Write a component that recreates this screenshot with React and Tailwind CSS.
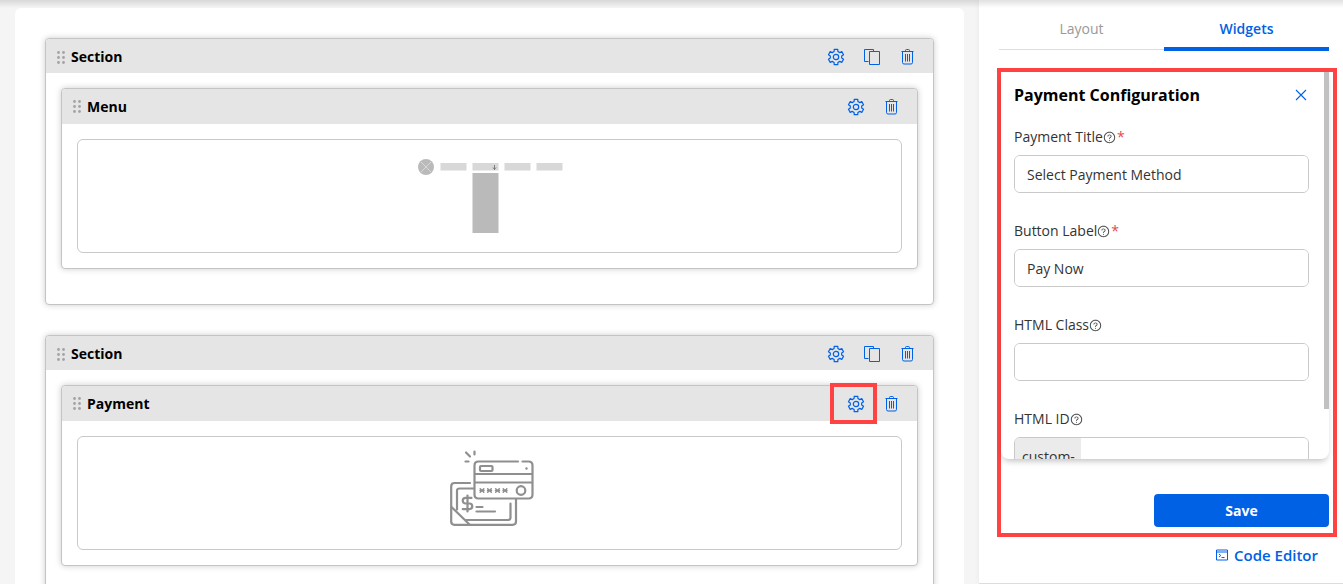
import React, { useState } from 'react';
import { DollarSign } from 'lucide-react';
import { AiOutlineQuestionCircle } from 'react-icons/ai';

const DragHandle = () => (
  <svg width="8" height="13" viewBox="0 0 8 13" fill="#a3a3a3" aria-hidden="true">
    {[1.5, 6.5, 11.5].map((y) => (
      <g key={y}>
        <circle cx="1.5" cy={y} r="1.4" />
        <circle cx="6.5" cy={y} r="1.4" />
      </g>
    ))}
  </svg>
);

// Outline of a six-toothed gear, centred on 9,9
const gearPoints = [-90, -30, 30, 90, 150, 210]
  .flatMap((a) => [
    [7.9, a - 13],
    [7.9, a + 13],
    [5.8, a + 19],
    [5.8, a + 41],
  ])
  .map(([r, deg]) => {
    const t = (deg * Math.PI) / 180;
    return `${(9 + r * Math.cos(t)).toFixed(2)},${(9 + r * Math.sin(t)).toFixed(2)}`;
  })
  .join(' ');

const GearIcon = () => (
  <svg
    width="18"
    height="18"
    viewBox="0 0 18 18"
    fill="none"
    stroke="currentColor"
    strokeWidth="1.2"
    strokeLinejoin="round"
    aria-hidden="true"
  >
    <polygon points={gearPoints} />
    <circle cx="9" cy="9" r="2.7" />
  </svg>
);

const CopyIcon = () => (
  <svg width="16" height="16" viewBox="0 0 16 16" fill="none" stroke="currentColor" aria-hidden="true">
    <path d="M4.5 12.5h-4v-12h9v2" />
    <path d="M5.5 2.5h10v13h-10z" />
  </svg>
);

const TrashIcon = () => (
  <svg width="14" height="16" viewBox="0 0 14 16" fill="none" stroke="currentColor" aria-hidden="true">
    <path d="M.5 2.5h12M4.5 2.5v-1q0-1 1-1h2q1 0 1 1v1" />
    <path d="M1.5 2.5v11q0 1.5 1.5 1.5h7q1.5 0 1.5-1.5v-11" />
    <path d="M4.5 5v7.500M6.5 5v7.500M8.5 5v7.500" />
  </svg>
);

const CloseIcon = () => (
  <svg width="12" height="12" viewBox="0 0 12 12" fill="none" stroke="currentColor" strokeWidth="1.1" aria-hidden="true">
    <path d="M1 1l10 10M11 1L1 11" />
  </svg>
);

const TerminalIcon = () => (
  <svg width="12" height="12" viewBox="0 0 12 12" fill="none" stroke="currentColor" aria-hidden="true">
    <path d="M.5 1h11v10H.5zM.5 3h11" />
    <path d="M3 5l1.8 1.5L3 8M5.5 8.500h3" />
  </svg>
);

// Placeholder artwork for the menu widget
const MenuPreview = () => (
  <svg width="146" height="76" viewBox="0 0 146 76" aria-hidden="true">
    <circle cx="9" cy="9" r="8" fill="#bababa" />
    <path d="M4 4l10 10M14 4L4 14" stroke="#d8d8d8" />
    {[23.5, 55.5, 87.5, 119.5].map((x) => (
      <rect key={x} x={x} y="5" width="26" height="7.5" fill="#d8d8d8" />
    ))}
    <path d="M77.5 7v5M76 9.500l1.500 2 1.500-2" stroke="#777" fill="none" strokeWidth=".9" />
    <rect x="55.500" y="15" width="26" height="60" fill="#bababa" />
  </svg>
);

// Placeholder artwork for the payment widget
const PaymentPreview = () => (
  <svg
    width="84"
    height="76"
    viewBox="0 0 84 76"
    fill="none"
    stroke="#8f8f8f"
    strokeWidth="2.2"
    strokeLinecap="round"
    strokeLinejoin="round"
    className="mb-2.5 ml-1"
    aria-hidden="true"
  >
    <path d="M16 2.500l4 4M24.500 1.500v3M15.500 11.500h3" />
    <path d="M68 11.500h-39.500q-4 0-4 4v29q0 4 4 4h50q4 0 4-4v-29q0-4-4-4h-6" />
    <path d="M25 24h57M25 32.500h57" />
    <rect x="30" y="16" width="12.500" height="5" rx="1" />
    <circle cx="76.500" cy="18.500" r="1.200" fill="#8f8f8f" stroke="none" />
    <circle cx="71" cy="40.500" r="4.300" />
    {[32, 39.5, 47.5, 55].map((x) => (
      <path
        key={x}
        d={`M${x - 1.8} 38.700l3.600 3.600M${x + 1.8} 38.700l-3.600 3.600M${x - 2} 40.500h4`}
        strokeWidth="1.5"
      />
    ))}
    <path d="M20 33H4.500q-3.300 0-3.300 3.500v35q0 3.300 3.300 3.300h58q3.500 0 3.500-3.300V49.500" />
    <path d="M24 38.500H9.500q-2.500 0-2.500 2v19M60.500 53.500v14q0 2.500-2.500 2.500H16" />
    <path d="M1.500 57l18 17.500" />
    <path d="M26.500 57h6M26.500 61.500h18.500" />
    <DollarSign x="8" y="44" width="19" height="19" strokeWidth={2.8} color="#8f8f8f" />
  </svg>
);

const IconButton = ({ label, highlighted, children }) => (
  <button type="button" aria-label={label} className="relative flex w-9 items-center justify-center text-[#0061e5]">
    {children}
    {highlighted && (
      <span className="pointer-events-none absolute -top-3 -left-2 h-[41px] w-[47px] border-4 border-[#ff4343]" />
    )}
  </button>
);

const Widget = ({ title, highlighted, children }) => (
  <div className="rounded-sm border border-[#c4c4c4] bg-white shadow-[0_0_6px_rgba(0,0,0,0.2)]">
    <div className="flex h-[35px] items-center rounded-t-sm bg-[#e5e5e5] pr-[7px] pl-[11px]">
      <DragHandle />
      <h3 className="ml-1.5 flex-1 text-sm font-bold text-black">{title}</h3>
      <IconButton label={`${title} settings`} highlighted={highlighted}>
        <GearIcon />
      </IconButton>
      <IconButton label={`Delete ${title}`}>
        <TrashIcon />
      </IconButton>
    </div>
    <div className="p-[15px]">
      <div className="flex h-[114px] items-center justify-center rounded-md border border-[#c9c9c9]">
        {children}
      </div>
    </div>
  </div>
);

const Section = ({ children }) => (
  <section className="rounded-sm border border-[#c4c4c4] bg-white shadow-[0_0_6px_rgba(0,0,0,0.2)]">
    <div className="flex h-[34px] items-center rounded-t-sm bg-[#e5e5e5] pt-0.5 pr-[7px] pl-[11px]">
      <DragHandle />
      <h2 className="ml-1.5 flex-1 text-sm font-bold text-black">Section</h2>
      <IconButton label="Section settings">
        <GearIcon />
      </IconButton>
      <IconButton label="Duplicate section">
        <CopyIcon />
      </IconButton>
      <IconButton label="Delete section">
        <TrashIcon />
      </IconButton>
    </div>
    <div className="px-[15px] pt-[15px] pb-[35px]">{children}</div>
  </section>
);

const Field = ({ id, label, required, prefix, value, onChange }) => (
  <div className="mb-7">
    <label htmlFor={id} className="mb-2 flex h-5 items-center text-sm text-[#333]">
      {label}
      <AiOutlineQuestionCircle size={13} className="text-[#444]" />
      {required && <span className="ml-px text-[#e5484d]">*</span>}
    </label>
    <div className="flex h-[38px] overflow-hidden rounded-md border border-[#c9c9c9]">
      {prefix && (
        <span className="flex w-[66px] items-center bg-[#ebebeb] pt-0.5 pl-[7px] text-sm text-[#333]">{prefix}</span>
      )}
      <input
        id={id}
        type="text"
        value={value}
        onChange={onChange}
        className="min-w-0 flex-1 bg-white px-3 pt-0.5 text-sm text-[#333] outline-none"
      />
    </div>
  </div>
);

function App() {
  const [activeTab, setActiveTab] = useState('Widgets');
  const [config, setConfig] = useState({
    title: 'Select Payment Method',
    button: 'Pay Now',
    htmlClass: '',
    htmlId: '',
  });

  const handleChange = (key) => (e) => setConfig({ ...config, [key]: e.target.value });

  return (
    <div className="relative flex h-screen overflow-hidden bg-[#f5f5f5] font-['Open_Sans',sans-serif]">
      {/* Shadow of the top bar */}
      <div className="pointer-events-none absolute inset-x-0 top-0 z-10 h-2 bg-linear-to-b from-black/12 to-transparent" />

      <main className="min-w-0 flex-1 px-[15px] pt-2">
        <div className="flex min-h-screen flex-col gap-[30px] rounded-md bg-white p-[30px]">
          <Section>
            <Widget title="Menu">
              <MenuPreview />
            </Widget>
          </Section>
          <Section>
            <Widget title="Payment" highlighted>
              <PaymentPreview />
            </Widget>
          </Section>
        </div>
      </main>

      <aside className="w-[364px] shrink-0 border-b border-[#ddd] bg-white shadow-[0_0_6px_rgba(0,0,0,0.05)]">
        <div className="mr-3.5 ml-5 flex h-[51px] items-start text-sm">
          {['Layout', 'Widgets'].map((tab) => (
            <button
              key={tab}
              type="button"
              onClick={() => setActiveTab(tab)}
              className={
                activeTab === tab
                  ? 'h-[51px] flex-1 border-b-4 border-[#0061e5] pt-2.5 font-semibold text-[#0061e5]'
                  : 'h-[50px] flex-1 border-b border-[#ddd] pt-2 text-[#999]'
              }
            >
              {tab}
            </button>
          ))}
        </div>

        <form className="mt-[17px] mr-1.5 ml-[18px] border-4 border-[#ff4343] pr-1 pb-1.5" onSubmit={(e) => e.preventDefault()}>
          <div className="flex h-[387px] items-start overflow-hidden rounded-b-lg shadow-[0_4px_6px_-2px_rgba(0,0,0,0.25)]">
            <div className="flex-1 pt-[11px] pr-[15px] pl-[13px]">
              <div className="mb-5 flex h-6 items-center justify-between">
                <h2 className="text-base font-bold text-black">Payment Configuration</h2>
                <button type="button" aria-label="Close" className="pr-0.5 text-[#0061e5]">
                  <CloseIcon />
                </button>
              </div>
              <Field id="title" label="Payment Title" required value={config.title} onChange={handleChange('title')} />
              <Field id="button" label="Button Label" required value={config.button} onChange={handleChange('button')} />
              <Field id="class" label="HTML Class" value={config.htmlClass} onChange={handleChange('htmlClass')} />
              <Field id="html-id" label="HTML ID" prefix="custom-" value={config.htmlId} onChange={handleChange('htmlId')} />
            </div>
            <div className="h-[337px] w-[5px] bg-[#c1c1c1]" />
          </div>
          <button
            type="submit"
            className="mt-[35px] ml-auto block h-[33px] w-[175px] rounded-sm bg-[#0061e5] text-sm font-bold text-white"
          >
            Save
          </button>
        </form>

        <div className="mt-1.5 mr-[25px] flex justify-end">
          <a href="#code-editor" className="flex items-center gap-1.5 text-[15px] leading-6 font-semibold text-[#0061e5]">
            <TerminalIcon />
            Code Editor
          </a>
        </div>
      </aside>
    </div>
  );
}

export default App;
